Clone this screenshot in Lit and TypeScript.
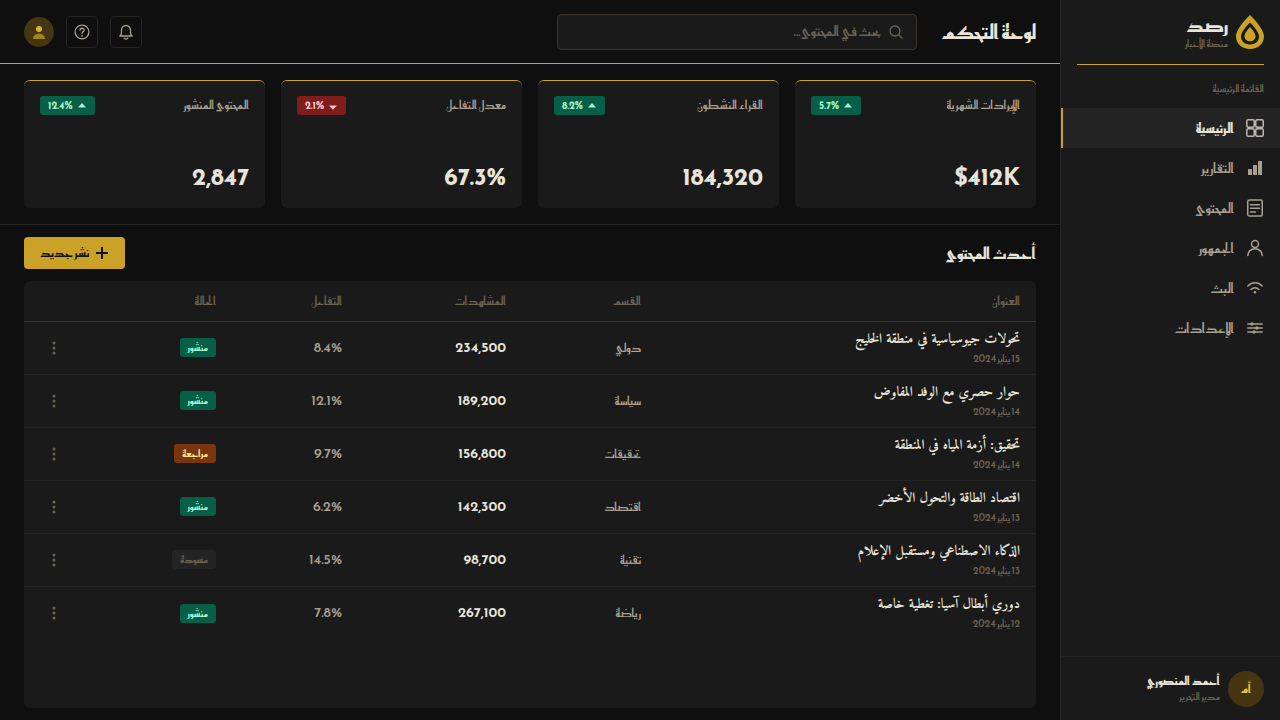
import { LitElement, html, svg, css, TemplateResult } from "lit";
import { customElement, property } from "lit/decorators.js";

interface NavItem { label: string; icon: TemplateResult; active?: boolean }
interface Stat { label: string; value: string; delta: string; down?: boolean }
interface Article {
  title: string; date: string; section: string; views: string; rate: string;
  status: "published" | "review" | "draft";
}

const icons = {
  grid: svg`<rect x=".75" y=".75" width="7.500" height="7.500" rx="1.500"/><rect x="9.750" y=".75" width="7.500" height="7.500" rx="1.500"/><rect x=".75" y="9.750" width="7.500" height="7.500" rx="1.500"/><rect x="9.750" y="9.750" width="7.500" height="7.500" rx="1.500"/>`,
  bars: svg`<g fill="currentColor" stroke="none"><rect x="2" y="10" width="4" height="6" rx=".5"/><rect x="7" y="6" width="4" height="10" rx=".5"/><rect x="12" y="2" width="4" height="14" rx=".5"/></g>`,
  doc: svg`<rect x="1.75" y="1" width="14.5" height="16" rx="1.500"/><path d="M4.500 5.700h9M4.500 9.300h9M4.500 13h5"/>`,
  user: svg`<circle cx="9" cy="5" r="3.5"/><path d="M1.8 16.5C1.8 12.5 5 9.800 9 9.800s7.200 2.700 7.200 6.700"/>`,
  wifi: svg`<path d="M1.800 7c4.200-4.200 10.200-4.200 14.400 0M5 10.500c2.300-2.200 5.700-2.200 8 0"/><circle cx="9" cy="13.200" r="1.300" fill="currentColor" stroke="none"/>`,
  sliders: svg`<path d="M1.800 5h14.400M1.800 9h14.400M1.800 13h14.400"/><g fill="currentColor" stroke="none"><circle cx="6" cy="5" r="1.700"/><circle cx="11" cy="9" r="1.700"/><circle cx="8" cy="13" r="1.700"/></g>`,
};

const NAV: NavItem[] = [
  { label: "الرئيسية", icon: icons.grid, active: true },
  { label: "التقارير", icon: icons.bars },
  { label: "المحتوى", icon: icons.doc },
  { label: "الجمهور", icon: icons.user },
  { label: "البث", icon: icons.wifi },
  { label: "الإعدادات", icon: icons.sliders },
];

const STATS: Stat[] = [
  { label: "الإيرادات الشهرية", value: "$412K", delta: "5.7%" },
  { label: "القراء النشطون", value: "184,320", delta: "8.2%" },
  { label: "معدل التفاعل", value: "67.3%", delta: "2.1%", down: true },
  { label: "المحتوى المنشور", value: "2,847", delta: "12.4%" },
];

const ARTICLES: Article[] = [
  { title: "تحولات جيوسياسية في منطقة الخليج", date: "15 يناير 2024", section: "دولي", views: "234,500", rate: "8.4%", status: "published" },
  { title: "حوار حصري مع الوفد المفاوض", date: "14 يناير 2024", section: "سياسة", views: "189,200", rate: "12.1%", status: "published" },
  { title: "تحقيق: أزمة المياه في المنطقة", date: "14 يناير 2024", section: "تحقيقات", views: "156,800", rate: "9.7%", status: "review" },
  { title: "اقتصاد الطاقة والتحول الأخضر", date: "13 يناير 2024", section: "اقتصاد", views: "142,300", rate: "6.2%", status: "published" },
  { title: "الذكاء الاصطناعي ومستقبل الإعلام", date: "13 يناير 2024", section: "تقنية", views: "98,700", rate: "14.5%", status: "draft" },
  { title: "دوري أبطال آسيا: تغطية خاصة", date: "12 يناير 2024", section: "رياضة", views: "267,100", rate: "7.8%", status: "published" },
];

const STATUS_LABEL = { published: "منشور", review: "مراجعة", draft: "مسودة" };

const shared = css`
  *, *::before, *::after { box-sizing: border-box; }
  h1, h2, p { margin: 0; padding: 0; }
  button, input { font: inherit; color: inherit; margin: 0; }
  button { cursor: pointer; padding: 0; }
  svg { display: block; flex: none; }
  .line { fill: none; stroke: currentColor; stroke-width: 1.5; stroke-linecap: round; stroke-linejoin: round; }
`;

@customElement("app-sidebar")
export class AppSidebar extends LitElement {
  static styles = [shared, css`
    :host { display: flex; flex-direction: column; flex: 0 0 220px; background: #1a1a1a; border-left: 1px solid #242424; }
    .brand { display: flex; align-items: center; gap: 8px; height: 65px; margin: 0 16px; border-bottom: 1px solid #c9a227; }
    .name { font-size: 20px; line-height: 24px; font-weight: 700; color: #e8e4d9; }
    .tagline { font-size: 10px; line-height: 14px; color: #6b6252; }
    .caption { padding: 16px 16px 12px; font-size: 10px; line-height: 15px; color: #6b6252; }
    .item { display: flex; align-items: center; gap: 12px; height: 40px; padding: 0 16px; font-size: 14px; color: #a89f8f; text-decoration: none; border-left: 2px solid transparent; }
    .item.active { background: #242424; border-left-color: #c9a227; color: #e8e4d9; font-weight: 700; }
    .item.active svg { color: #bbb8ae; }
    .profile { display: flex; align-items: center; gap: 8px; height: 64px; margin-top: auto; padding: 0 16px; border-top: 1px solid #242424; }
    .avatar { display: grid; place-items: center; width: 36px; height: 36px; border-radius: 50%; background: #453510; color: #e3bf45; font-size: 12px; font-weight: 700; }
    .person { font-size: 12px; line-height: 16px; font-weight: 700; color: #e8e4d9; }
    .role { font-size: 10px; line-height: 16px; color: #6b6252; }
  `];
  render() {
    return html`
      <div class="brand">
        <svg width="28" height="34" viewBox="0 0 28 34" aria-hidden="true">
          <path fill="#c9a227" fill-rule="evenodd" d="M14 0C14 0 0 13 0 21.500C0 28.500 6 34 14 34s14-5.500 14-12.500C28 13 14 0 14 0ZM14 7.500C14 7.500 5 16 5 21.500c0 5 4 8 9 8s9-3 9-8C23 16 14 7.500 14 7.500Z"/>
          <path fill="#c9a227" d="M14 12s5.500 5.500 5.500 9.200c0 3-2.500 5-5.500 5s-5.500-2-5.500-5C8.500 17.500 14 12 14 12Z"/>
        </svg>
        <div><p class="name">رصد</p><p class="tagline">منصة الأخبار</p></div>
      </div>
      <p class="caption">القائمة الرئيسية</p>
      <nav>
        ${NAV.map((n) => html`<a class="item ${n.active ? "active" : ""}" href="#">
          <svg class="line" width="18" height="18" viewBox="0 0 18 18" aria-hidden="true">${n.icon}</svg><span>${n.label}</span></a>`)}
      </nav>
      <div class="profile">
        <span class="avatar">أم</span>
        <div><p class="person">أحمد المنصوري</p><p class="role">مدير التحرير</p></div>
      </div>`;
  }
}

@customElement("app-topbar")
export class AppTopbar extends LitElement {
  static styles = [shared, css`
    :host { display: flex; align-items: center; height: 64px; padding: 0 24px; border-bottom: 1px solid #c9a227; }
    h1 { min-width: 95px; font-size: 20px; line-height: 28px; font-weight: 700; color: #e8e4d9; white-space: nowrap; }
    .search { display: flex; align-items: center; gap: 8px; flex: 0 1 360px; height: 36px; margin-right: 24px; padding: 0 13px; background: #1a1a1a; border: 1px solid #3a342c; border-radius: 4px; color: #6b6252; }
    .search input { flex: 1; min-width: 0; padding: 0; border: 0; outline: 0; background: none; font-size: 14px; color: #e8e4d9; }
    .search input::placeholder { color: #6b6252; opacity: 1; }
    .actions { display: flex; align-items: center; gap: 12px; margin-right: auto; }
    .actions .line, .search .line { stroke-width: 1.3; }
    .icon { display: grid; place-items: center; width: 32px; height: 32px; background: none; border: 1px solid #242424; border-radius: 4px; color: #a89f8f; }
    .avatar { display: grid; place-items: center; width: 30px; height: 30px; border: 0; border-radius: 50%; background: #453510; }
  `];
  render() {
    return html`
      <h1>لوحة التحكم</h1>
      <label class="search">
        <svg class="line" width="14" height="14" viewBox="0 0 14 14" aria-hidden="true"><circle cx="6" cy="6" r="5"/><path d="M9.800 9.800l3.400 3.400"/></svg>
        <input type="search" placeholder="بحث في المحتوى..." aria-label="بحث في المحتوى">
      </label>
      <div class="actions">
        <button class="icon" aria-label="الإشعارات">
          <svg class="line" width="16" height="16" viewBox="0 0 16 16"><path d="M1.800 12h12.400c-1.200-1-1.700-2-1.700-3.500V6a4.500 4.500 0 0 0-9 0v2.500c0 1.500-.5 2.500-1.700 3.500ZM6 14c.8 1.300 3.200 1.300 4 0"/></svg>
        </button>
        <button class="icon" aria-label="مساعدة">
          <svg class="line" width="16" height="16" viewBox="0 0 16 16"><circle cx="8" cy="8" r="6.900"/><path d="M6 6.300c0-2.700 4.200-2.700 4.200-.1C10.200 7.700 8 7.600 8 9.300"/><circle cx="8" cy="11.700" r=".3"/></svg>
        </button>
        <button class="avatar" aria-label="الحساب">
          <svg width="14" height="14" viewBox="0 0 14 14"><circle cx="7" cy="4" r="3" fill="#d9b036"/><path d="M1 14a6 5.500 0 0 1 12 0Z" fill="#a3821f"/></svg>
        </button>
      </div>`;
  }
}

@customElement("stat-card")
export class StatCard extends LitElement {
  @property({ attribute: false }) stat!: Stat;
  static styles = [shared, css`
    :host { display: flex; flex-direction: column; justify-content: space-between; min-height: 128px; padding: 15px 16px 16px; background: #1a1a1a; border-top: 1px solid #c9a227; border-radius: 6px; }
    .head { display: flex; align-items: center; justify-content: space-between; white-space: nowrap; }
    .label { font-size: 12px; line-height: 19px; color: #a89f8f; }
    .delta { display: flex; align-items: center; gap: 4px; height: 19px; padding: 0 8px; border-radius: 3px; background: #065f46; color: #a7f3d0; font-size: 10px; font-weight: 700; }
    .delta.down { background: #7f1d1d; color: #fecaca; }
    .value { font-size: 24px; line-height: 30px; font-weight: 700; color: #e8e4d9; }
  `];
  render() {
    const s = this.stat;
    return html`
      <div class="head">
        <span class="label">${s.label}</span>
        <span class="delta ${s.down ? "down" : ""}">
          <svg width="10" height="10" viewBox="0 0 10 10" aria-hidden="true"><path fill="currentColor" d="${s.down ? "M1 4.500h8l-4 4.300Z" : "M5 2l4 4.500H1Z"}"/></svg>${s.delta}
        </span>
      </div>
      <p class="value">${s.value}</p>`;
  }
}

@customElement("article-table")
export class ArticleTable extends LitElement {
  static styles = [shared, css`
    :host { display: block; flex: 1; background: #1a1a1a; border-radius: 6px; }
    table { width: 100%; table-layout: fixed; border-collapse: collapse; text-align: right; }
    .c-section { width: 135px; }
    .c-views { width: 164px; }
    .c-rate { width: 126px; }
    .c-status { width: 148px; }
    .c-menu { width: 60px; }
    th, td { padding: 0 16px; }
    th { height: 40px; font-size: 12px; font-weight: 500; color: #6b6252; border-bottom: 1px solid #383633; }
    td { height: 53px; font-size: 12px; font-weight: 500; color: #a89f8f; border-bottom: 1px solid #242424; }
    tr:last-child td { border-bottom: 0; }
    .headline { padding-top: 2px; }
    .title { font-size: 14px; line-height: 20px; font-weight: 700; color: #e8e4d9; font-family: Amiri, "DejaVu Sans", serif; }
    .date { font-size: 10px; line-height: 17px; color: #6b6252; }
    .views { font-size: 14px; font-weight: 600; color: #e8e4d9; }
    .rate { font-size: 14px; }
    .status { display: inline-block; vertical-align: middle; padding: 0 8px; border-radius: 3px; font-size: 10px; line-height: 19px; font-weight: 600; }
    .published { background: #065f46; color: #a7f3d0; }
    .review { background: #78350f; color: #fde68a; }
    .draft { background: #242424; color: #6b6252; }
    .menu { display: grid; place-items: center; width: 28px; height: 28px; border: 0; background: none; color: #6b6252; }
  `];
  render() {
    return html`
      <table>
        <colgroup><col><col class="c-section"><col class="c-views"><col class="c-rate"><col class="c-status"><col class="c-menu"></colgroup>
        <thead><tr><th>العنوان</th><th>القسم</th><th>المشاهدات</th><th>التفاعل</th><th>الحالة</th><th></th></tr></thead>
        <tbody>
          ${ARTICLES.map((a) => html`<tr>
            <td class="headline"><p class="title">${a.title}</p><p class="date">${a.date}</p></td>
            <td>${a.section}</td>
            <td class="views">${a.views}</td>
            <td class="rate">${a.rate}</td>
            <td><span class="status ${a.status}">${STATUS_LABEL[a.status]}</span></td>
            <td><button class="menu" aria-label="خيارات"><svg width="4" height="14" viewBox="0 0 4 14" fill="currentColor"><circle cx="2" cy="2" r="1.500"/><circle cx="2" cy="7" r="1.500"/><circle cx="2" cy="12" r="1.500"/></svg></button></td>
          </tr>`)}
        </tbody>
      </table>`;
  }
}

@customElement("app-root")
export class AppRoot extends LitElement {
  static styles = [shared, css`
    :host { display: block; direction: rtl; color: #e8e4d9; background: #0f0f0f; font-family: "Reem Kufi", Lato, "DejaVu Sans", sans-serif; font-weight: 500; }
    .shell { display: flex; min-height: 100vh; }
    main { display: flex; flex-direction: column; flex: 1; min-width: 0; }
    .stats { display: grid; grid-template-columns: repeat(4, 1fr); gap: 16px; padding: 16px 24px; border-bottom: 1px solid #242424; }
    .latest { display: flex; flex-direction: column; flex: 1; gap: 12px; padding: 12px 24px; }
    .bar { display: flex; align-items: center; justify-content: space-between; }
    h2 { font-size: 16px; line-height: 24px; font-weight: 700; }
    .publish { display: flex; align-items: center; justify-content: center; gap: 6px; min-width: 101px; height: 32px; padding: 0 16px; border: 0; border-radius: 4px; background: #c9a227; color: #0f0f0f; font-size: 12px; font-weight: 600; }
  `];
  render() {
    return html`
      <div class="shell">
        <app-sidebar></app-sidebar>
        <main>
          <app-topbar></app-topbar>
          <section class="stats">${STATS.map((s) => html`<stat-card .stat=${s}></stat-card>`)}</section>
          <section class="latest">
            <div class="bar">
              <h2>أحدث المحتوى</h2>
              <button class="publish"><svg width="14" height="14" viewBox="0 0 14 14" aria-hidden="true"><path d="M7 1v12M1 7h12" fill="none" stroke="currentColor" stroke-width="2"/></svg><span>نشر جديد</span></button>
            </div>
            <article-table></article-table>
          </section>
        </main>
      </div>`;
  }
}
